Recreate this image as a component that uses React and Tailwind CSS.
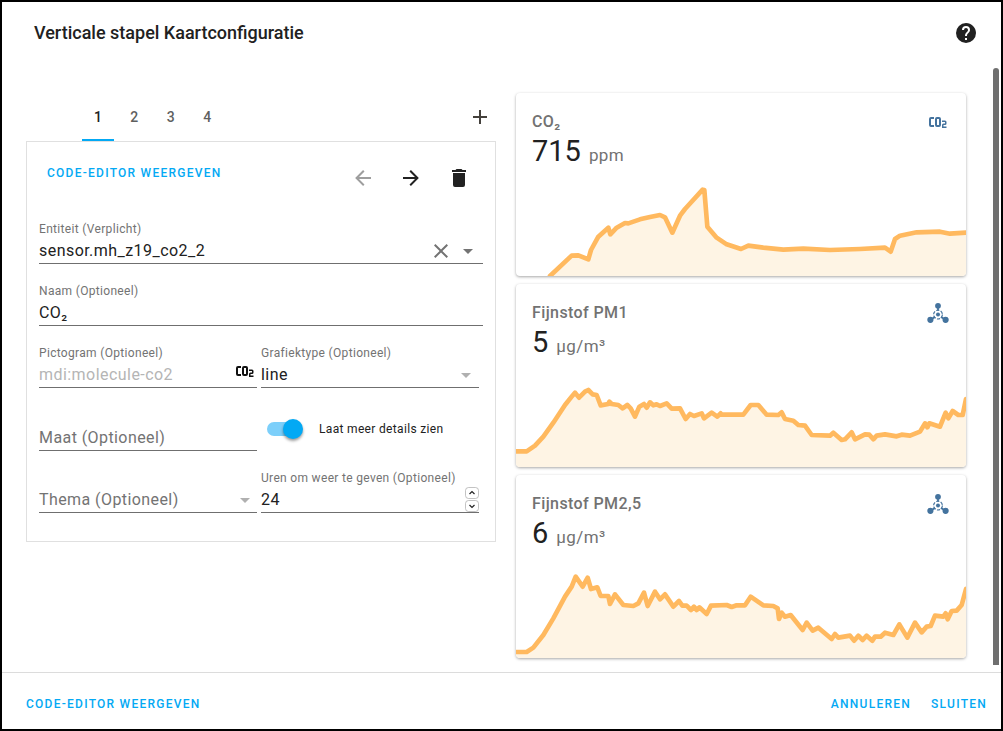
import React from 'react';

const co2Path = "M5,7A2,2 0 0,0 3,9V15A2,2 0 0,0 5,17H8V15H5V9H8V7H5M11,7A2,2 0 0,0 9,9V15A2,2 0 0,0 11,17H13A2,2 0 0,0 15,15V9A2,2 0 0,0 13,7H11M11,9H13V15H11V9M16,10.5V12H19V13.5H17.5A1.5,1.5 0 0,0 16,15V18H20.5V16.5H17.5V15H19A1.5,1.5 0 0,0 20.5,13.5V12A1.5,1.5 0 0,0 19,10.5H16Z";

const MdiIcon = ({ d, className }) => (
    <svg viewBox="0 0 24 24" className={className} fill="currentColor">
        <path d={d} />
    </svg>
);

const MoleculeIcon = () => (
    <svg viewBox="0 0 24 24" className="w-6 h-6 text-[#44739e]" fill="currentColor">
        <circle cx="12" cy="4.8" r="2.9" />
        <circle cx="4.4" cy="18.8" r="3.1" />
        <circle cx="19.6" cy="18.8" r="3.1" />
        <circle cx="12" cy="13.6" r="2" />
        <path d="M12 6v3.5M6.5 17.5l2.6-1.6M17.5 17.5l-2.6-1.6" stroke="currentColor" strokeWidth="1.8" fill="none" />
        <circle cx="12" cy="13.6" r="4.4" stroke="currentColor" strokeWidth="1.2" strokeDasharray="3.2 1.4" fill="none" />
    </svg>
);

const co2Line = "120,573 185,512 205,511 235,523 243,495 265,455 295,428 301,448 320,428 345,414 355,415 390,403 420,396 450,390 465,397 487,443 510,392 525,372 578,314 583,315 592,425 620,458 650,478 693,492 715,482 760,488 820,494 880,491 960,495 1050,492 1125,488 1142,500 1155,462 1170,452 1220,442 1290,440 1320,446 1368,443";
const pm1Line = "18,514 50,514 75,497 100,470 130,428 165,375 185,350 195,338 207,353 225,335 235,330 248,343 260,345 272,376 295,372 298,365 305,372 325,375 338,385 352,375 362,385 375,410 388,380 402,372 410,383 420,367 430,376 440,373 450,378 470,370 485,386 510,385 527,417 540,402 552,408 575,400 582,415 605,398 622,410 632,400 632,404 700,404 722,375 745,375 770,404 805,405 815,397 825,417 850,422 865,435 885,437 905,465 960,467 970,458 995,480 1005,478 1025,457 1035,478 1065,463 1078,464 1090,478 1100,467 1125,463 1160,469 1175,464 1200,467 1230,455 1245,430 1252,442 1258,430 1290,440 1307,398 1315,415 1328,393 1345,405 1358,405 1368,357";
const pm25Line = "18,546 50,546 70,533 100,495 130,445 165,380 185,350 197,320 218,350 233,323 243,357 262,352 272,378 295,378 300,402 315,373 340,405 370,408 385,400 402,368 413,408 435,365 450,388 465,373 490,410 507,393 517,407 530,407 543,420 552,410 560,420 568,412 590,432 603,407 650,405 665,411 680,406 705,406 722,380 760,406 790,408 803,415 807,447 815,428 825,440 842,435 878,480 890,458 908,482 925,473 965,507 975,492 985,503 1020,497 1032,512 1045,497 1058,510 1070,497 1087,512 1095,500 1112,500 1125,488 1150,495 1168,463 1192,503 1215,458 1235,487 1250,470 1262,468 1275,437 1300,440 1307,430 1313,448 1325,423 1340,422 1355,405 1368,357";

const cards = [
    { title: "CO₂", value: "715", unit: "ppm", line: co2Line, first: "120,573", bottom: 573, icon: <MdiIcon d={co2Path} className="w-6 h-6 text-[#44739e]" /> },
    { title: "Fijnstof PM1", value: "5", unit: "µg/m³", line: pm1Line, first: "18,561", bottom: 561, icon: <MoleculeIcon /> },
    { title: "Fijnstof PM2,5", value: "6", unit: "µg/m³", line: pm25Line, first: "18,564", bottom: 564, icon: <MoleculeIcon /> },
];

const GraphCard = ({ card }) => (
    <div className="h-[183px] bg-white rounded-[4px] overflow-hidden flex flex-col justify-between shadow-[0_1px_3px_rgba(0,0,0,0.35)]">
        <div className="flex justify-between pl-4 pr-4 pt-[17px]">
            <div>
                <div className="text-base leading-6 font-medium text-[#727272] tracking-[0.4px]">{card.title}</div>
                <div className="flex items-baseline leading-8 mt-px">
                    <span className="text-[29px] text-[#212121]">{card.value}</span>
                    <span className="text-[17px] text-[#727272] ml-2 tracking-[0.4px]">{card.unit}</span>
                </div>
            </div>
            {card.icon}
        </div>
        <svg viewBox={`18 ${card.bottom - 300} 1350 300`} className="w-[450px] h-[100px] block">
            <polygon points={`${card.first} ${card.line} 1368,${card.bottom}`} fill="#fef4e4" />
            <polyline points={card.line} fill="none" stroke="#ffb95f" strokeWidth="14" strokeLinejoin="round" strokeLinecap="round" />
        </svg>
    </div>
);

const Field = ({ label, value, muted, bigLabel, children, className = "" }) => (
    <div className={`h-[62px] flex flex-col justify-end border-b border-[#6f6f6f] relative ${className}`}>
        {label && <div className="text-xs leading-4 mb-0.5 text-[#737373] tracking-[0.32px]">{label}</div>}
        <div className="flex items-center justify-between h-6">
            {bigLabel
                ? <span className="text-base text-[#737373] tracking-[0.42px]">{bigLabel}</span>
                : <span className={`text-base tracking-[0.45px] ${muted ? 'text-[#b5b5b5]' : 'text-[#212121]'}`}>{value}</span>}
            {children}
        </div>
    </div>
);

const Caret = ({ className = "" }) => (
    <svg viewBox="0 0 10 5" className={`w-2.5 h-[5px] ${className}`} fill="currentColor">
        <path d="M0 0h10L5 5z" />
    </svg>
);

const linkText = "text-xs font-medium text-[#03a9f4] tracking-[1.25px] uppercase";

const App = () => {
    return (
        <div className="w-[1003px] h-[731px] border-2 border-black bg-white flex flex-col font-['Roboto',sans-serif] overflow-hidden">
            {/* Dialog title */}
            <div className="h-[66px] shrink-0 flex justify-between pl-8 pr-[23px] pt-[19px]">
                <h2 className="text-lg leading-6 font-medium text-[#212121] h-6">Verticale stapel Kaartconfiguratie</h2>
                <MdiIcon d="M15.07,11.25L14.17,12.17C13.45,12.89 13,13.5 13,15H11V14.5C11,13.39 11.45,12.39 12.17,11.67L13.41,10.41C13.78,10.05 14,9.55 14,9C14,7.89 13.1,7 12,7A2,2 0 0,0 10,9H8A4,4 0 0,1 12,5A4,4 0 0,1 16,9C16,9.88 15.64,10.67 15.07,11.25M13,19H11V17H13M12,2A10,10 0 0,0 2,12A10,10 0 0,0 12,22A10,10 0 0,0 22,12C22,6.47 17.5,2 12,2Z" className="w-6 h-6 text-[#212121]" />
            </div>

            <div className="flex-1 flex min-h-0">
                {/* Editor */}
                <div className="w-[470px] ml-6 pt-[30px] shrink-0">
                    <div className="h-[43px] flex items-stretch pl-[54px] pr-1.5 justify-between">
                        <div className="flex">
                            <div className="w-9 text-center text-sm font-medium leading-[38px] text-[#212121] relative">
                                1
                                <div className="absolute left-0.5 right-0.5 bottom-0 h-0.5 bg-[#03a9f4]"></div>
                            </div>
                            {["2", "3", "4"].map((n) => (
                                <div key={n} className="w-[36.5px] text-center text-sm font-medium leading-[38px] text-[#5f5f5f]">{n}</div>
                            ))}
                        </div>
                        <MdiIcon d="M19,13H13V19H11V13H5V11H11V5H13V11H19V13Z" className="w-6 h-6 mt-[7px] -mr-[2px] text-[#44403c]" />
                    </div>
                    <div className="h-[401px] border border-[#e0e0e0] pl-3 pr-3">
                        <div className="h-[60px] flex justify-between pt-[10px]">
                            <span className={`${linkText} ml-2 mt-[13px] leading-4`}>Code-editor weergeven</span>
                            <div className="flex gap-6 mt-[14px] mr-[12px]">
                                <MdiIcon d="M20,11V13H8L13.5,18.5L12.08,19.92L4.16,12L12.08,4.08L13.5,5.5L8,11H20Z" className="w-6 h-6 text-[#9e9e9e]" />
                                <MdiIcon d="M4,11V13H16L10.5,18.5L11.92,19.92L19.84,12L11.92,4.08L10.5,5.5L16,11H4Z" className="w-6 h-6 text-[#212121]" />
                                <MdiIcon d="M19,4H15.5L14.5,3H9.5L8.5,4H5V6H19M6,19A2,2 0 0,0 8,21H16A2,2 0 0,0 18,19V7H6V19Z" className="w-6 h-6 text-[#212121]" />
                            </div>
                        </div>
                        <Field label="Entiteit (Verplicht)" value="sensor.mh_z19_co2_2">
                            <div className="flex items-center gap-[10px] mr-[10px]">
                                <MdiIcon d="M19,6.41L17.59,5L12,10.59L6.41,5L5,6.41L10.59,12L5,17.59L6.41,19L12,13.41L17.59,19L19,17.59L13.41,12L19,6.41Z" className="w-6 h-6 text-[#737373]" />
                                <Caret className="text-[#737373]" />
                            </div>
                        </Field>
                        <Field label="Naam (Optioneel)" value="CO₂" />
                        <div className="grid grid-cols-[218px_218px] gap-x-1">
                            <Field label="Pictogram (Optioneel)" value="mdi:molecule-co2" muted>
                                <MdiIcon d={co2Path} className="w-6 h-6 -mt-2 text-[#111111]" />
                            </Field>
                            <Field label="Grafiektype (Optioneel)" value="line" className="h-[61px]">
                                <Caret className="mr-2 text-[#b0b0b0]" />
                            </Field>
                            <Field bigLabel="Maat (Optioneel)" className="mt-px" />
                            <div className="h-[62px] flex items-center pl-1.5">
                                <div className="relative w-[36px] h-5 mt-[19px] mr-4">
                                    <div className="absolute left-0 top-[3px] w-[32px] h-[14px] rounded-full bg-[#7ccffa]"></div>
                                    <div className="absolute left-[16px] top-0 w-5 h-5 rounded-full bg-[#03a9f4] shadow-[0_2px_3px_rgba(0,0,0,0.4)]"></div>
                                </div>
                                <span className="text-xs mt-[19px] text-[#212121] tracking-[0.33px]">Laat meer details zien</span>
                            </div>
                            <Field bigLabel="Thema (Optioneel)">
                                <Caret className="mr-[7px] text-[#b0b0b0]" />
                            </Field>
                            <Field label="Uren om weer te geven (Optioneel)" value="24">
                                <div className="flex flex-col -mt-[2px]">
                                    <svg viewBox="0 0 14 12" className="w-3.5 h-3 text-[#9a9a9a]" fill="none">
                                        <rect x="0.5" y="0.5" width="13" height="11" rx="3" stroke="currentColor" strokeWidth="0.6" />
                                        <path d="M4.5 7l2.5-2.5L9.5 7" stroke="#222222" strokeWidth="1.2" />
                                    </svg>
                                    <svg viewBox="0 0 14 12" className="w-3.5 h-3 text-[#9a9a9a] mt-px" fill="none">
                                        <rect x="0.5" y="0.5" width="13" height="11" rx="3" stroke="currentColor" strokeWidth="0.6" />
                                        <path d="M4.5 5l2.5 2.5L9.5 5" stroke="#222222" strokeWidth="1.2" />
                                    </svg>
                                </div>
                            </Field>
                        </div>
                    </div>
                </div>

                {/* Card preview */}
                <div className="w-[450px] ml-5 pt-[25px] shrink-0 flex flex-col gap-2">
                    {cards.map((card) => <GraphCard key={card.title} card={card} />)}
                </div>

                {/* Scrollbar */}
                <div className="w-1.5 ml-[27px] mb-[7px] bg-[#6f6f6f] rounded-t-[3px]"></div>
            </div>

            {/* Dialog actions */}
            <div className="h-[57px] shrink-0 border-t border-[#dcdcdc] flex items-center justify-between pl-6 pr-3.5">
                <span className={`${linkText} mt-[5px]`}>Code-editor weergeven</span>
                <div className="flex gap-5 mt-[5px]">
                    <span className={linkText}>Annuleren</span>
                    <span className={linkText}>Sluiten</span>
                </div>
            </div>
        </div>
    );
};

export default App;
